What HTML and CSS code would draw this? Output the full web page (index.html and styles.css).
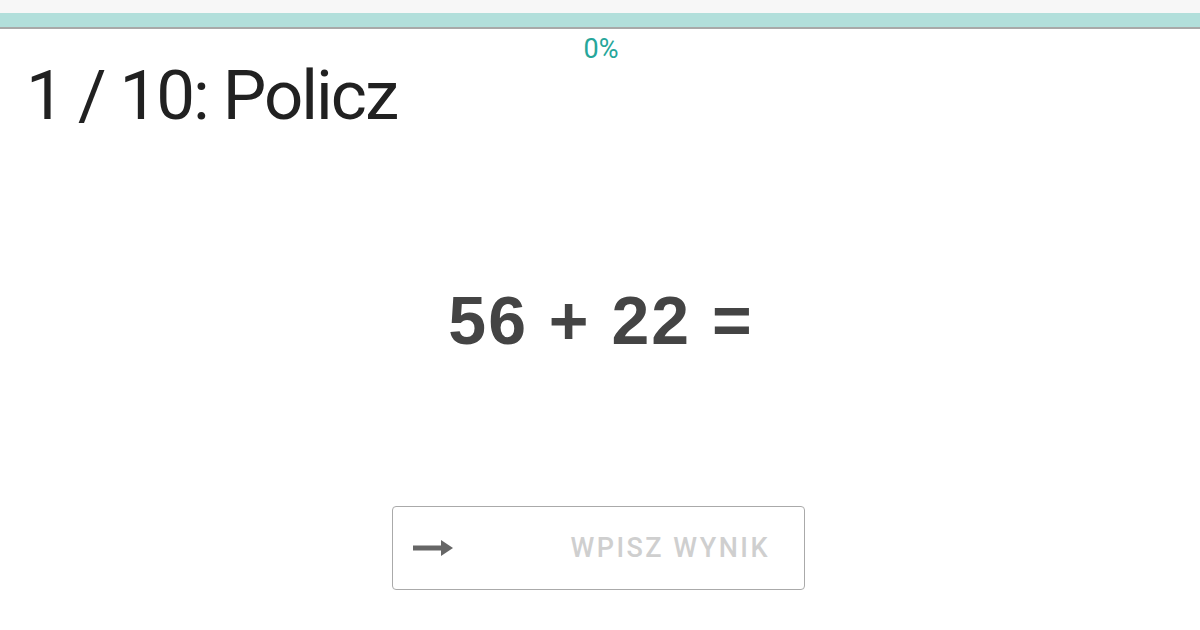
FILE: index.html
```html
<!DOCTYPE html>
<html lang="pl">
<head>
<meta charset="utf-8">
<link rel="stylesheet" href="styles.css">
</head>
<body>
<div class="topband"></div>
<div class="progress"><div class="progress-fill"></div></div>
<div class="percent">0%</div>
<h1 class="title">1 / 10: Policz</h1>
<div class="task">56 + 22 =</div>
<div class="answer-row">
  <label class="answer">
    <svg class="arrow" width="40" height="18" viewBox="0 0 40 18"><path d="M0 6.5h28V1l12 8-12 8v-5.5H0z" fill="#666"/></svg>
    <input class="answer-input" type="text" placeholder="WPISZ WYNIK">
  </label>
</div>
</body>
</html>
```

FILE: styles.css
```css
html, body {
  margin: 0;
  padding: 0;
  background: #fff;
  font-family: Roboto, "Liberation Sans", sans-serif;
}
.topband {
  height: 13px;
  background: #f7f7f7;
}
.progress {
  height: 14px;
  background: #b2dfdb;
  border-bottom: 2px solid #a9a9a9;
}
.progress-fill {
  width: 0;
  height: 100%;
  background: #26a69a;
}
.percent {
  text-align: center;
  color: #26a69a;
  font-size: 27px;
  line-height: 30px;
  margin-top: 5px;
  padding-left: 2px;
}
.title {
  margin: -8px 0 0 26px;
  font-weight: 400;
  font-size: 69px;
  letter-spacing: -2px;
  line-height: 80px;
  color: #212121;
}
.task {
  margin-top: 144px;
  text-align: center;
  font-family: "Liberation Sans", Arial, sans-serif;
  font-weight: 700;
  font-size: 68px;
  letter-spacing: 2px;
  padding-left: 2px;
  line-height: 80px;
  color: #444;
}
.answer-row {
  display: flex;
  justify-content: center;
  margin-top: 146px;
  padding-right: 3px;
}
.answer {
  display: flex;
  align-items: center;
  width: 411px;
  height: 82px;
  border: 1px solid #aaa;
  border-radius: 4px;
  box-sizing: content-box;
  padding: 0;
}
.arrow {
  margin-left: 20px;
  flex: none;
}
.answer-input {
  flex: 1;
  min-width: 0;
  border: none;
  outline: none;
  background: transparent;
  text-align: right;
  padding: 0 34px 0 0;
  font-family: Roboto, "Liberation Sans", sans-serif;
  font-size: 27px;
  font-weight: 500;
  letter-spacing: 2.5px;
  color: #444;
}
.answer-input::placeholder {
  color: #cfcfcf;
}
```
